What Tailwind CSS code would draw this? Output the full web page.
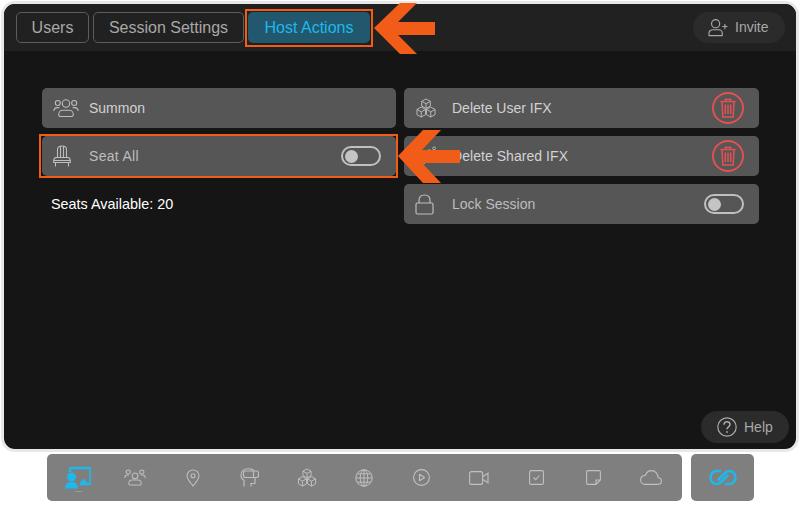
<!DOCTYPE html>
<html>
<head>
<meta charset="utf-8">
<script src="https://cdn.jsdelivr.net/npm/@tailwindcss/browser@4"></script>
</head>
<body class="bg-white font-['Liberation_Sans',Arial,sans-serif]">
<div class="relative w-[800px] h-[507px] overflow-hidden bg-white">
  <div class="pt-[1px] pl-[1px]">
    <div class="w-[798px] h-[451px] rounded-[14px] border-[3px] border-[#e8e8e8] bg-[#151515] overflow-hidden flex flex-col">
      <header class="h-[47px] bg-[#212121] flex items-start pt-[8px] pl-[12px] pr-[11px] shrink-0">
        <div class="h-[31px] w-[73px] rounded-[5px] border border-[#5c5c5c] flex items-center justify-center text-[16px] text-[#a8a8a8]">Users</div>
        <div class="ml-[4px] h-[31px] w-[151px] rounded-[5px] border border-[#5c5c5c] flex items-center justify-center text-[16px] text-[#a8a8a8]">Session Settings</div>
        <div class="relative ml-[4px] h-[31px] w-[122px] rounded-[5px] bg-[#21586e] flex items-center justify-center text-[16px] text-[#1fb8ea]">Host Actions
          <div class="absolute left-[-3px] right-[-3px] top-[-3px] bottom-[-4px] border-2 border-[#f25c19]"></div>
        </div>
        <div class="ml-auto h-[31px] w-[92px] rounded-full bg-[#2b2b2b] flex items-center pl-[15px] gap-[7px] text-[14px] text-[#a8a8a8]">
          <svg class="w-[20px] h-[19px]" viewBox="0 0 21 20" fill="none" stroke="#a8a8a8" stroke-width="1.200"><circle cx="8" cy="6" r="4.300"/><path d="M1 18.500v-2.500c0-2.200 2-3.600 3.800-3.600h6.400c1.800 0 3.800 1.400 3.800 3.600v2.500z" stroke-linejoin="round"/><path d="M15 9h5.500M17.750 6.200v5.600"/></svg>
          <span>Invite</span>
        </div>
      </header>
      <main class="flex-1 relative grid grid-cols-[354px_355px] gap-x-[8px] content-start pt-[37px] pl-[38px]">
        <div class="flex flex-col">
          <div class="h-[40px] rounded-[5px] bg-[#565656] flex items-center pl-[11px] text-[14px] text-[#d2d2d2]">
            <svg class="w-[26px] h-[20px] mr-[10px]" viewBox="0 0 26 20" fill="none" stroke="#bdbdbd" stroke-width="1.100"><circle cx="13" cy="5.500" r="3.700"/><circle cx="4.800" cy="5" r="2.500"/><circle cx="21.200" cy="5" r="2.500"/><path d="M7.500 18.500c-1.200 0-1.800-.8-1.800-2s.8-4.200 3.800-4.200h7c3 0 3.800 3 3.800 4.200s-.6 2-1.800 2z"/><path d="M.8 13c.2-2.300 1.500-3.400 3.500-3.400h2M25.200 13c-.2-2.300-1.500-3.400-3.500-3.400h-2"/></svg>
            <span>Summon</span>
          </div>
          <div class="relative mt-[8px] h-[40px] rounded-[5px] bg-[#565656] flex items-center pl-[11px] pr-[15px] text-[14px] text-[#bdbdbd]">
            <svg class="w-[18px] h-[22px] mr-[18px]" viewBox="0 0 18 22" fill="none" stroke="#bdbdbd" stroke-width="1.100"><path d="M4.500 12.500V4.500C4.500 2.500 6 1 9 1s4.500 1.500 4.500 3.500v8M7.500 1.500v11M10.500 1.500v11"/><path d="M3 12.500h12c1 0 2 .8 2.300 3H.7c.3-2.200 1.300-3 2.300-3zM.7 15.500v2h16.600v-2M2.500 17.500V21.500M15.500 17.500V21.500"/></svg>
            <span class="tracking-[0.3px]">Seat All</span>
            <div class="ml-auto w-[40px] h-[20px] rounded-full border-2 border-[#c0c0c0] flex items-center pl-[2px]"><div class="w-[13px] h-[13px] rounded-full bg-[#c4c4c4]"></div></div>
            <div class="absolute left-[-3px] right-[-2px] top-[-2px] bottom-[-2px] border-2 border-[#f25c19]"></div>
          </div>
          <div class="mt-[18px] pl-[9px] text-[14.4px] leading-[20px] text-white">Seats Available: 20</div>
        </div>
        <div class="flex flex-col gap-[8px]">
          <div class="h-[40px] rounded-[5px] bg-[#565656] flex items-center pl-[12px] pr-[15px] text-[14px] text-[#d2d2d2]">
            <svg class="w-[20px] h-[20px] mr-[16px]" viewBox="0 0 21 21" fill="none" stroke="#bdbdbd" stroke-width="1"><path d="M10.500 1l4.500 2.500v5L10.500 11 6 8.500v-5zM6 3.500l4.500 2.500L15 3.500M10.500 6v5"/><path d="M5.500 9.500L10 12v5.500L5.500 20 1 17.500V12zM1 12l4.500 2.500L10 12M5.500 14.500V20"/><path d="M15.500 9.500L20 12v5.500L15.500 20 11 17.500V12zM11 12l4.500 2.500L20 12M15.500 14.500V20"/></svg>
            <span>Delete User IFX</span>
            <div class="ml-auto w-[32px] h-[32px] rounded-full border-2 border-[#e25050] flex items-center justify-center">
              <svg class="w-[16px] h-[20px]" viewBox="0 0 16 20" fill="none" stroke="#e25050" stroke-width="1.500"><path d="M.5 3.500h15M5.500 3.500V1.200h5v2.300M2 3.500l.8 15.500h10.400L14 3.500M5.300 6.500V16M8 6.500V16M10.700 6.500V16"/></svg>
            </div>
          </div>
          <div class="h-[40px] rounded-[5px] bg-[#565656] flex items-center pl-[12px] pr-[15px] text-[14px] text-[#d2d2d2]">
            <svg class="w-[20px] h-[20px] mr-[16px]" viewBox="0 0 21 21" fill="none" stroke="#bdbdbd" stroke-width="1"><path d="M5.500 9.500L10 12v5.500L5.500 20 1 17.500V12zM1 12l4.500 2.500L10 12M5.500 14.500V20"/><circle cx="14" cy="6" r="2"/><circle cx="19" cy="2.500" r="1.500"/></svg>
            <span class="tracking-[0.05px]">Delete Shared IFX</span>
            <div class="ml-auto w-[32px] h-[32px] rounded-full border-2 border-[#e25050] flex items-center justify-center">
              <svg class="w-[16px] h-[20px]" viewBox="0 0 16 20" fill="none" stroke="#e25050" stroke-width="1.500"><path d="M.5 3.500h15M5.500 3.500V1.200h5v2.300M2 3.500l.8 15.500h10.400L14 3.500M5.300 6.500V16M8 6.500V16M10.700 6.500V16"/></svg>
            </div>
          </div>
          <div class="h-[40px] rounded-[5px] bg-[#565656] flex items-center pl-[11px] pr-[15px] text-[14px] text-[#bdbdbd]">
            <svg class="w-[19px] h-[21px] mr-[18px]" viewBox="0 0 19 21" fill="none" stroke="#bdbdbd" stroke-width="1.200"><rect x="1" y="9" width="17" height="11" rx="1.500"/><path d="M4 9V6.500C4 3 6.200 1 9.500 1S15 3 15 6.500V9"/></svg>
            <span>Lock Session</span>
            <div class="ml-auto w-[40px] h-[20px] rounded-full border-2 border-[#c0c0c0] flex items-center pl-[2px]"><div class="w-[13px] h-[13px] rounded-full bg-[#c4c4c4]"></div></div>
          </div>
        </div>
        <div class="absolute right-[7px] bottom-[6px] w-[88px] h-[32px] rounded-full bg-[#2b2b2b] flex items-center pl-[16px] gap-[7px] text-[14px] text-[#a8a8a8]">
          <svg class="w-[20px] h-[20px]" viewBox="0 0 20 20" fill="none" stroke="#a8a8a8" stroke-width="1.200"><circle cx="10" cy="10" r="9.200"/><path d="M7 7.800c0-1.800 1.300-3 3-3s3 1.100 3 2.700c0 2.300-3 2.300-3 4.700" stroke-width="1.500"/><circle cx="10" cy="15" r=".9" fill="#a8a8a8" stroke="none"/></svg>
          <span>Help</span>
        </div>
      </main>
    </div>
  </div>
  <div class="mt-[2px] pl-[47px] flex gap-[9px]">
    <nav class="w-[635px] h-[47px] rounded-[5px] bg-[#7f7f7f] grid grid-cols-11 items-center px-[2.500px] [&_svg]:mx-auto">
      <svg class="w-[26px] h-[28px]" viewBox="0 0 26 28" fill="none"><path d="M5 8V5.500C5 4.800 5.500 4 6.500 4H24c1 0 1.500.8 1.500 1.500v13c0 1-.5 1.500-1.500 1.500h-9" stroke="#1fb8ea" stroke-width="2.400"/><circle cx="6.500" cy="13" r="4.500" fill="#1fb8ea"/><path d="M0 24.500c0-4 2-6.500 6.500-6.500s6.500 2.500 6.500 6.500z" fill="#1fb8ea"/><path d="M15 19l3.500-4.500 3.500 3.500v1z" fill="#1fb8ea"/><path d="M10 27.500h7" stroke="#9a9a9a" stroke-width="1"/></svg>
      <svg class="w-[22px] h-[19px]" viewBox="0 0 26 20" fill="none" stroke="#c0c0c0" stroke-width="1.200"><circle cx="13" cy="8" r="3.400"/><circle cx="5" cy="3.500" r="2.500"/><circle cx="21" cy="3.500" r="2.500"/><path d="M7.500 19c-1.200 0-1.800-.8-1.800-2s.8-4 3.800-4h7c3 0 3.800 2.800 3.800 4s-.6 2-1.800 2z"/><path d="M.8 10.500C1 8 2.300 7 4.300 7h1.500M25.200 10.500C25 8 23.700 7 21.700 7h-1.500"/></svg>
      <svg class="w-[14px] h-[18px]" viewBox="0 0 14 18" fill="none" stroke="#c0c0c0" stroke-width="1.100"><path d="M7 17C4 13 1 10 1 6.700 1 3.300 3.700 1 7 1s6 2.300 6 5.700C13 10 10 13 7 17z"/><circle cx="7" cy="6.700" r="2"/></svg>
      <svg class="w-[19px] h-[19px]" viewBox="0 0 19 19" fill="none" stroke="#c0c0c0" stroke-width="1.100"><path d="M4 18.500V12.500C1.500 11 1 9 1 7 1 3 4 .8 8 .8c3 0 5 .7 6 2.200"/><path d="M11 18.500V15.500H15V9.500"/><rect x="3.500" y="3" width="15" height="6.500" rx="2"/><path d="M13.500 3v6.500"/></svg>
      <svg class="w-[20px] h-[19px]" viewBox="0 0 21 21" fill="none" stroke="#c0c0c0" stroke-width="1.100"><path d="M10.500 1l4.500 2.500v5L10.500 11 6 8.500v-5zM6 3.500l4.500 2.500L15 3.500M10.500 6v5"/><path d="M5.500 9.500L10 12v5.500L5.500 20 1 17.500V12zM1 12l4.500 2.500L10 12M5.500 14.500V20"/><path d="M15.500 9.500L20 12v5.500L15.500 20 11 17.500V12zM11 12l4.500 2.500L20 12M15.500 14.500V20"/></svg>
      <svg class="w-[18px] h-[18px]" viewBox="0 0 18 18" fill="none" stroke="#c0c0c0" stroke-width="1"><circle cx="9" cy="9" r="8.200"/><ellipse cx="9" cy="9" rx="3.800" ry="8.200"/><path d="M9 .8v16.400M.8 9h16.400M2 4.800h14M2 13.200h14"/></svg>
      <svg class="w-[17px] h-[17px]" viewBox="0 0 17 17" fill="none" stroke="#c0c0c0" stroke-width="1.100"><circle cx="8.500" cy="8.500" r="7.900"/><path d="M6.500 5.200l5 3.300-5 3.300z" stroke-linejoin="round"/></svg>
      <svg class="w-[20px] h-[14px]" viewBox="0 0 20 14" fill="none" stroke="#c0c0c0" stroke-width="1.100"><rect x=".6" y=".6" width="13" height="12.800" rx="2"/><path d="M14 5.500l5-3.300v9.600l-5-3.300"/></svg>
      <svg class="w-[15px] h-[15px]" viewBox="0 0 15 15" fill="none" stroke="#c0c0c0" stroke-width="1.100"><rect x=".6" y=".6" width="13.800" height="13.800" rx="1.500"/><path d="M4.500 7.500l2.200 2.200 3.800-4.200"/></svg>
      <svg class="w-[15px] h-[15px]" viewBox="0 0 15 15" fill="none" stroke="#c0c0c0" stroke-width="1.100"><path d="M2 .6h11c.8 0 1.400.6 1.400 1.400v8L10 14.400H2c-.8 0-1.400-.6-1.400-1.400V2C.6 1.200 1.200.6 2 .6zM14.400 10H10v4.400"/></svg>
      <svg class="w-[22px] h-[15px]" viewBox="0 0 22 15" fill="none" stroke="#c0c0c0" stroke-width="1.100"><path d="M5 14.400h13c2 0 3.400-1.500 3.400-3.300 0-1.900-1.400-3.200-3.200-3.300C18 4 15.500.6 11.500.6 8.500.6 6.400 2.500 5.500 5.300 2.800 5.500.6 7.300.6 10c0 2.500 2 4.400 4.400 4.400z"/></svg>
    </nav>
    <div class="w-[63px] h-[47px] rounded-[5px] bg-[#7f7f7f] flex items-center justify-center">
      <svg class="w-[28px] h-[17px]" viewBox="0 0 28 17" fill="none" stroke="#1fb8ea" stroke-width="2.600" stroke-linecap="round"><path d="M9.500 10.500l6.500-6.500c1-1 2.500-2 4.500-2C24 2 26.500 5 26.500 8.500S24 15 20.500 15H17"/><path d="M18.500 6.500l-6.500 6.500c-1 1-2.500 2-4.500 2C4 15 1.500 12 1.500 8.500S4 2 7.500 2H11"/></svg>
    </div>
  </div>
  <svg class="absolute left-0 top-0 w-[800px] h-[507px] pointer-events-none" viewBox="0 0 800 507"><path fill="#f25c19" d="M374 28L400 3h17L398 22h37v13h-37l19 19h-17z"/><path fill="#f25c19" d="M398 156l25-26h18l-19 20h38v13h-38l19 20h-18z"/></svg>
</div>
</body>
</html>
